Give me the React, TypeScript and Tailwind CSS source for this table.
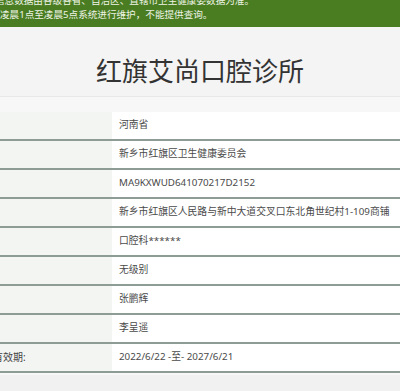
const rows: { label?: string; value: string }[] = [
  { value: '河南省' },
  { value: '新乡市红旗区卫生健康委员会' },
  { value: 'MA9KXWUD641070217D2152' },
  { value: '新乡市红旗区人民路与新中大道交叉口东北角世纪村1-109商铺' },
  { value: '口腔科******' },
  { value: '无级别' },
  { value: '张鹏辉' },
  { value: '李呈遥' },
  { label: '有效期:', value: '2022/6/22 -至- 2027/6/21' },
]

export default function App() {
  return (
    <div
      className="w-[400px] h-[391px] overflow-hidden bg-[#f1f1f1]"
      style={{ fontFamily: '"Noto Sans", "Noto Sans CJK SC", sans-serif' }}
    >
      <div className="h-[27px] overflow-hidden bg-[#4a7d22] text-[#eef4e6] text-[9.6px] leading-[14px]">
        <div className="-mt-[6px] whitespace-nowrap">
          <div className="-ml-[5px]">信息数据由各级各省、自治区、直辖市卫生健康委数据为准。</div>
          <div>凌晨1点至凌晨5点系统进行维护，不能提供查询。</div>
        </div>
      </div>

      <div className="h-[70px] pt-[19px] flex items-center justify-center bg-[#f4f4f4] border-b border-[#e8e8e8]">
        <h1 className="text-[26px] text-[#333]">红旗艾尚口腔诊所</h1>
      </div>

      <div className="h-[15px] bg-[#f7f7f7]" />

      <div>
        {rows.map((row, i) => (
          <div key={i} className="flex h-[29px] border-b-2 border-[#8d9c94]">
            <div className="w-[112px] shrink-0 bg-[#f3f5f3] flex items-center text-[10px] text-[#444]">
              {row.label && <span className="-ml-[7px] whitespace-nowrap">{row.label}</span>}
            </div>
            <div className="flex-1 bg-white flex items-center pl-[7px] text-[9.8px] text-[#4a4a4a] whitespace-nowrap overflow-hidden">
              {row.value}
            </div>
          </div>
        ))}
      </div>

      <div className="h-[2px] bg-[#f7f7f7]" />
    </div>
  )
}
